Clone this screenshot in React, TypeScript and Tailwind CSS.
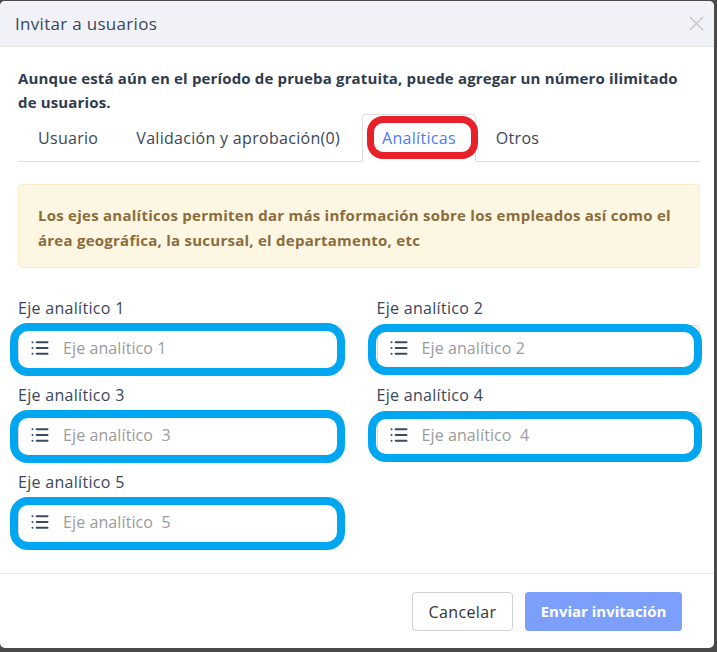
import React from "react";

const ListIcon = () => (
  <svg width="20" height="20" viewBox="0 0 24 24" fill="none" stroke="#3b4a5e" strokeWidth="2.4" strokeLinecap="round" strokeLinejoin="round">
    <path d="M3 5h.01" />
    <path d="M3 12h.01" />
    <path d="M3 19h.01" />
    <path d="M8 5h13" />
    <path d="M8 12h13" />
    <path d="M8 19h13" />
  </svg>
);

function Field({ label, placeholder, right }: { label: string; placeholder: string; right?: boolean }) {
  return (
    <div className="flex flex-col">
      <div className="text-[16px] tracking-[0.3px] leading-[20px] text-[#3a4658] mb-[7px]">{label}</div>
      <div className="relative">
        <div className="h-[46px] border border-[#d9d9d9] rounded-[4px] bg-white flex items-center pl-[11px]">
          <ListIcon />
          <span className="ml-[13px] text-[16px] tracking-[0.1px] text-[#9b9b9b] whitespace-pre">{placeholder}</span>
        </div>
        <div
          className={
            "absolute pointer-events-none border-[8px] border-[#00a6ef] rounded-[18px] " +
            (right ? "left-[-9px] right-[-2px] top-[-1px] bottom-[-4px]" : "left-[-8px] right-[-3px] top-[-2px] bottom-[-5px]")
          }
        />
      </div>
    </div>
  );
}

export default function App() {
  return (
    <div className="w-[717px] h-[652px] bg-[#4a4a4a] pt-[1px]" style={{ fontFamily: "'Open Sans', 'Noto Sans', sans-serif" }}>
      <div className="w-[714px] h-[647px] bg-white rounded-[5px] flex flex-col overflow-hidden">
        <div className="h-[46px] bg-[#f1f2f7] border-b border-[#e3e4e8] flex items-center justify-between pl-[15px] pr-[10px] shrink-0">
          <span className="text-[17px] tracking-[0.3px] text-[#3a4658]">Invitar a usuarios</span>
          <svg width="15" height="15" viewBox="0 0 16 16" stroke="#c4c4c4" strokeWidth="1.4">
            <path d="M1 1L15 15M15 1L1 15" />
          </svg>
        </div>
        <div className="pl-[18px] pr-[14px] pt-[19px] flex-1">
          <p className="h-[48px] text-[15px] tracking-[0.15px] leading-[24px] font-bold text-[#2f3b4d] pr-[10px]">
            Aunque está aún en el período de prueba gratuita, puede agregar un número ilimitado de usuarios.
          </p>
          <div className="flex border-b border-[#dedede] h-[48px] text-[16px] tracking-[0.3px]">
            <div className="pl-[20px] pr-[19px] flex items-center text-[#3a4658]">Usuario</div>
            <div className="pl-[19px] pr-[22px] flex items-center text-[#3a4658]">Validación y aprobación(0)</div>
            <div className="relative px-[19px] flex items-center text-[#4f7cf6] border border-[#dedede] border-b-white rounded-t-[4px] mb-[-1px] bg-white">
              Analíticas
              <div className="absolute left-[4px] right-[-3px] top-[1px] bottom-[2px] border-[7px] border-[#e8202a] rounded-[16px] pointer-events-none" />
            </div>
            <div className="pl-[20px] flex items-center text-[#3a4658]">Otros</div>
          </div>
          <div className="mt-[22px] h-[84px] bg-[#fdf6e3] border border-[#faeccb] rounded-[4px] px-[19px] pt-[18px]">
            <p className="text-[15px] tracking-[0.25px] leading-[25px] font-bold text-[#8a6d3b]">
              Los ejes analíticos permiten dar más información sobre los empleados así como el área geográfica, la sucursal, el departamento, etc
            </p>
          </div>
          <div className="mt-[30px] grid grid-cols-2 gap-x-[35px] gap-y-[14px]">
            <Field label="Eje analítico 1" placeholder="Eje analítico 1" />
            <Field label="Eje analítico 2" placeholder="Eje analítico 2" right />
            <Field label="Eje analítico 3" placeholder="Eje analítico  3" />
            <Field label="Eje analítico 4" placeholder="Eje analítico  4" right />
            <Field label="Eje analítico 5" placeholder="Eje analítico  5" />
          </div>
        </div>
        <div className="h-[75px] border-t border-[#e6e6e6] flex items-start justify-end gap-[12px] pr-[32px] pt-[18px] shrink-0">
          <button className="h-[39px] w-[101px] border border-[#d0d0d0] rounded-[4px] bg-white text-[16px] tracking-[0.4px] text-[#333]">Cancelar</button>
          <button className="h-[39px] w-[157px] rounded-[4px] bg-[#7b9ffb] text-[15px] font-bold text-white">Enviar invitación</button>
        </div>
      </div>
    </div>
  );
}
